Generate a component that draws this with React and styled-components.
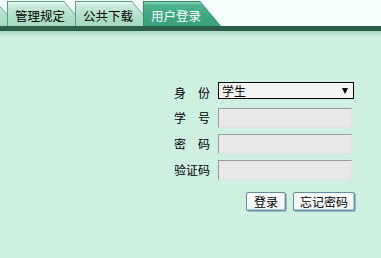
import React from "react";
import styled, { createGlobalStyle } from "styled-components";

const GlobalStyle = createGlobalStyle`
  html, body {
    margin: 0;
    padding: 0;
    background: #cdf0e0;
    font-family: "Noto Sans CJK SC", "Liberation Sans", sans-serif;
  }
`;

const Page = styled.div`
  width: 381px;
  height: 258px;
  overflow: hidden;
  background: #cdf0e0;
`;

const Header = styled.div`
  background: #f5fffd;
  padding-top: 1px;
  overflow: hidden;
`;

const TabBar = styled.div`
  display: flex;
  align-items: flex-end;
  height: 25px;
`;

const Tab = styled.div`
  position: relative;
  flex: 0 0 78px;
  height: 25px;
  margin-left: -10px;
  clip-path: polygon(0 0, 57px 0, 100% 100%, 0 100%);
  background: ${(p) => (p.$active ? "#2f8a68" : "#5c9c82")};
  &:first-child {
    margin-left: -61px;
  }

  &::before {
    content: "";
    position: absolute;
    inset: 1px 0 0 1px;
    clip-path: polygon(0 0, 56px 0, calc(100% - 1px) 100%, 0 100%);
    background: ${(p) =>
      p.$active
        ? "linear-gradient(#8fd6b8 0px, #4db48d 3px, #3ea881 60%, #39a27b 100%)"
        : "linear-gradient(#f2fbf7 0px, #cbecdc 3px, #b0dfc8 60%, #a6d9c0 100%)"};
  }
`;

const TabLabel = styled.span`
  position: relative;
  display: block;
  width: 66px;
  line-height: 20px;
  padding-top: 5px;
  text-align: center;
  font-size: 12.5px;
  color: ${(p) => (p.$active ? "#ffffff" : "#000000")};
`;

const Rule = styled.div`
  height: 5px;
  background: #2b6149;
`;

const Shade = styled.div`
  height: 6px;
  background: linear-gradient(#a8d6c1, #cdf0e0);
`;

const Form = styled.div`
  display: grid;
  grid-template-columns: 36px 137px;
  grid-template-rows: repeat(4, 20px);
  column-gap: 8px;
  row-gap: 6px;
  align-items: center;
  margin: 45px 0 0 174px;
`;

const Label = styled.label`
  font-size: 12px;
  color: #000;
  white-space: pre;
  line-height: 20px;
  margin-top: ${(p) => p.$shift || 0}px;
`;

const Select = styled.div`
  display: flex;
  align-items: center;
  justify-content: space-between;
  box-sizing: border-box;
  width: 136px;
  height: 17px;
  padding: 0 5px 0 3px;
  border: 1px solid #000;
  background: #f4f4f4;
  font-size: 12px;
  color: #000;
  align-self: start;
`;

const Arrow = styled.span`
  width: 0;
  height: 0;
  border-left: 3.5px solid transparent;
  border-right: 3.5px solid transparent;
  border-top: 6px solid #000;
`;

const Input = styled.div`
  box-sizing: border-box;
  width: 134px;
  height: 20px;
  background: #e8e8e8;
  border-top: 1px solid #9a9a9a;
  border-left: 1px solid #9a9a9a;
  border-right: 1px solid #e0e0e0;
  border-bottom: 1px solid #e0e0e0;
`;

const Actions = styled.div`
  display: flex;
  justify-content: flex-end;
  gap: 7px;
  width: 181px;
  margin: 12px 0 0 174px;
`;

const Button = styled.button`
  box-sizing: border-box;
  width: ${(p) => p.$w}px;
  height: 19px;
  padding: 0;
  font-family: "Noto Sans CJK SC", sans-serif;
  font-size: 12px;
  line-height: 16px;
  color: #000;
  background: linear-gradient(#ffffff, #eef4f6);
  border: 1px solid #5f8ea0;
  border-radius: 2px;
  box-shadow: inset -1px -1px 0 #b9cbd3, 1px 1px 0 #a3bcc6;
`;

const tabs = [
  { label: "", ghost: true },
  { label: "管理规定" },
  { label: "公共下载" },
  { label: "用户登录", active: true },
];

const fields = ["学　号", "密　码", "验证码"];

export default function App() {
  return (
    <Page>
      <GlobalStyle />
      <Header>
        <TabBar>
          {tabs.map((t, i) => (
            <Tab key={i} $active={t.active}>
              <TabLabel $active={t.active}>{t.label}</TabLabel>
            </Tab>
          ))}
        </TabBar>
      </Header>
      <Rule />
      <Shade />
      <Form>
        <Label $shift={1}>身　份</Label>
        <Select>
          <span>学生</span>
          <Arrow />
        </Select>
        {fields.map((f) => (
          <React.Fragment key={f}>
            <Label>{f}</Label>
            <Input />
          </React.Fragment>
        ))}
      </Form>
      <Actions>
        <Button $w={40}>登录</Button>
        <Button $w={62}>忘记密码</Button>
      </Actions>
    </Page>
  );
}
